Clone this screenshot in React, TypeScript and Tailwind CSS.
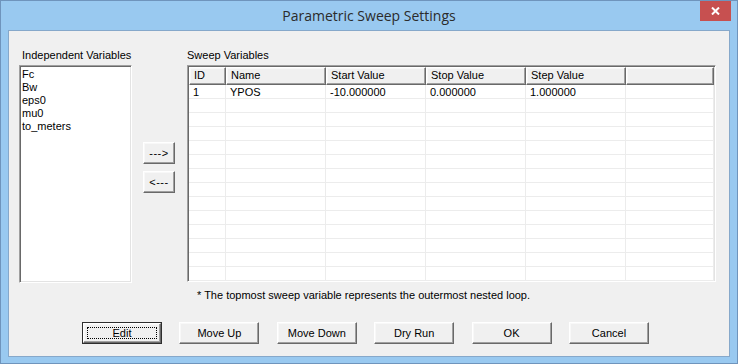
import React from "react";

const sunken =
  "border border-t-[#a0a0a0] border-l-[#a0a0a0] border-r-white border-b-white shadow-[inset_1px_1px_0_#696969,inset_-1px_-1px_0_#e3e3e3]";

const raised =
  "border border-t-white border-l-white border-r-[#696969] border-b-[#696969] shadow-[inset_-1px_-1px_0_#a0a0a0,inset_1px_1px_0_#f8f8f8]";

const cols = [
  { w: "w-[37px]", name: "ID" },
  { w: "w-[100px]", name: "Name" },
  { w: "w-[100px]", name: "Start Value" },
  { w: "w-[100px]", name: "Stop Value" },
  { w: "w-[100px]", name: "Step Value" },
  { w: "w-[88px]", name: "" },
];

const rows: string[][] = [["1", "YPOS", "-10.000000", "0.000000", "1.000000", ""]];
for (let i = 0; i < 13; i++) rows.push(["", "", "", "", "", ""]);

function Btn({ label, isDefault }: { label: string; isDefault?: boolean }) {
  if (isDefault) {
    return (
      <div className="w-[80px] h-[22px] border border-[#2e2e2e] shrink-0">
        <div
          className={`relative w-full h-full bg-[#f0f0f0] ${raised} flex items-center justify-center leading-[13px]`}
        >
          <span>{label}</span>
          <span className="absolute left-[3px] right-[3px] top-[3px] bottom-[3px] border border-dotted border-black" />
        </div>
      </div>
    );
  }
  return (
    <div
      className={`w-[80px] h-[22px] shrink-0 bg-[#f0f0f0] ${raised} flex items-center justify-center leading-[13px]`}
    >
      {label}
    </div>
  );
}

export default function App() {
  return (
    <div className="w-[738px] h-[364px] bg-[#99c9f0] border border-[#6f94bc] flex flex-col font-['Liberation_Sans',Arial,sans-serif] text-[11px] text-black">
      {/* title bar */}
      <div className="relative h-[29px] shrink-0 flex items-center justify-center">
        <span className="font-['Segoe_UI','Open_Sans',sans-serif] text-[14px] text-[#2b2b2b] leading-[20px]">
          Parametric Sweep Settings
        </span>
        <div className="absolute right-[6px] top-0 w-[31px] h-[20px] bg-[#c75050] flex items-center justify-center">
          <svg width="9" height="8" viewBox="0 0 9 8">
            <path d="M1 0.5 L8 7.5 M8 0.5 L1 7.5" stroke="white" strokeWidth="2" />
          </svg>
        </div>
      </div>

      {/* client */}
      <div className="flex-1 mx-[7px] mb-[6px] bg-[#f0f0f0] border border-[#86a8ca] flex flex-col">
        <div className="flex items-start pt-[18px] pl-[10px]">
          {/* left column */}
          <div className="w-[113px] shrink-0 flex flex-col">
            <div className="pl-[3px] h-[13px] leading-[13px] whitespace-nowrap">Independent Variables</div>
            <div className={`mt-[3px] h-[218px] bg-white ${sunken} pl-[2px] pt-[2px]`}>
              {["Fc", "Bw", "eps0", "mu0", "to_meters"].map((v) => (
                <div key={v} className="leading-[13px] h-[13px]">
                  {v}
                </div>
              ))}
            </div>
          </div>

          {/* arrow buttons */}
          <div className="ml-[11px] w-[32px] shrink-0 pt-[93px] flex flex-col gap-[7px]">
            <div className={`h-[22px] bg-[#f0f0f0] ${raised} flex items-center justify-center leading-[13px] tracking-[0.5px]`}>
              ---&gt;
            </div>
            <div className={`h-[22px] bg-[#f0f0f0] ${raised} flex items-center justify-center leading-[13px] tracking-[0.5px]`}>
              &lt;---
            </div>
          </div>

          {/* right column */}
          <div className="ml-[12px] flex flex-col">
            <div className="h-[13px] leading-[13px]">Sweep Variables</div>
            <div className={`mt-[3px] w-[529px] h-[217px] bg-white ${sunken} p-[1px] flex flex-col overflow-hidden`}>
              <div className="flex h-[18px] shrink-0">
                {cols.map((c, i) => (
                  <div
                    key={i}
                    className={`${c.w} h-[18px] shrink-0 bg-[#f0f0f0] ${raised} pl-[4px] leading-[15px] whitespace-nowrap`}
                  >
                    {c.name}
                  </div>
                ))}
              </div>
              {rows.map((r, ri) => (
                <div key={ri} className="flex h-[14px] shrink-0">
                  {r.map((cell, ci) => (
                    <div
                      key={ci}
                      className={`${cols[ci].w} h-[14px] shrink-0 border-r border-b border-[#ececec] pl-[4px] leading-[14px] whitespace-nowrap`}
                    >
                      {cell}
                    </div>
                  ))}
                </div>
              ))}
            </div>
            <div className="pl-[10px] mt-[7px] h-[13px] leading-[13px] whitespace-nowrap">
              * The topmost sweep variable represents the outermost nested loop.
            </div>
          </div>
        </div>

        {/* bottom buttons */}
        <div className="flex mt-[20px] pl-[73px] gap-[17.4px]">
          <Btn label="Edit" isDefault />
          <Btn label="Move Up" />
          <Btn label="Move Down" />
          <Btn label="Dry Run" />
          <Btn label="OK" />
          <Btn label="Cancel" />
        </div>
      </div>
    </div>
  );
}
